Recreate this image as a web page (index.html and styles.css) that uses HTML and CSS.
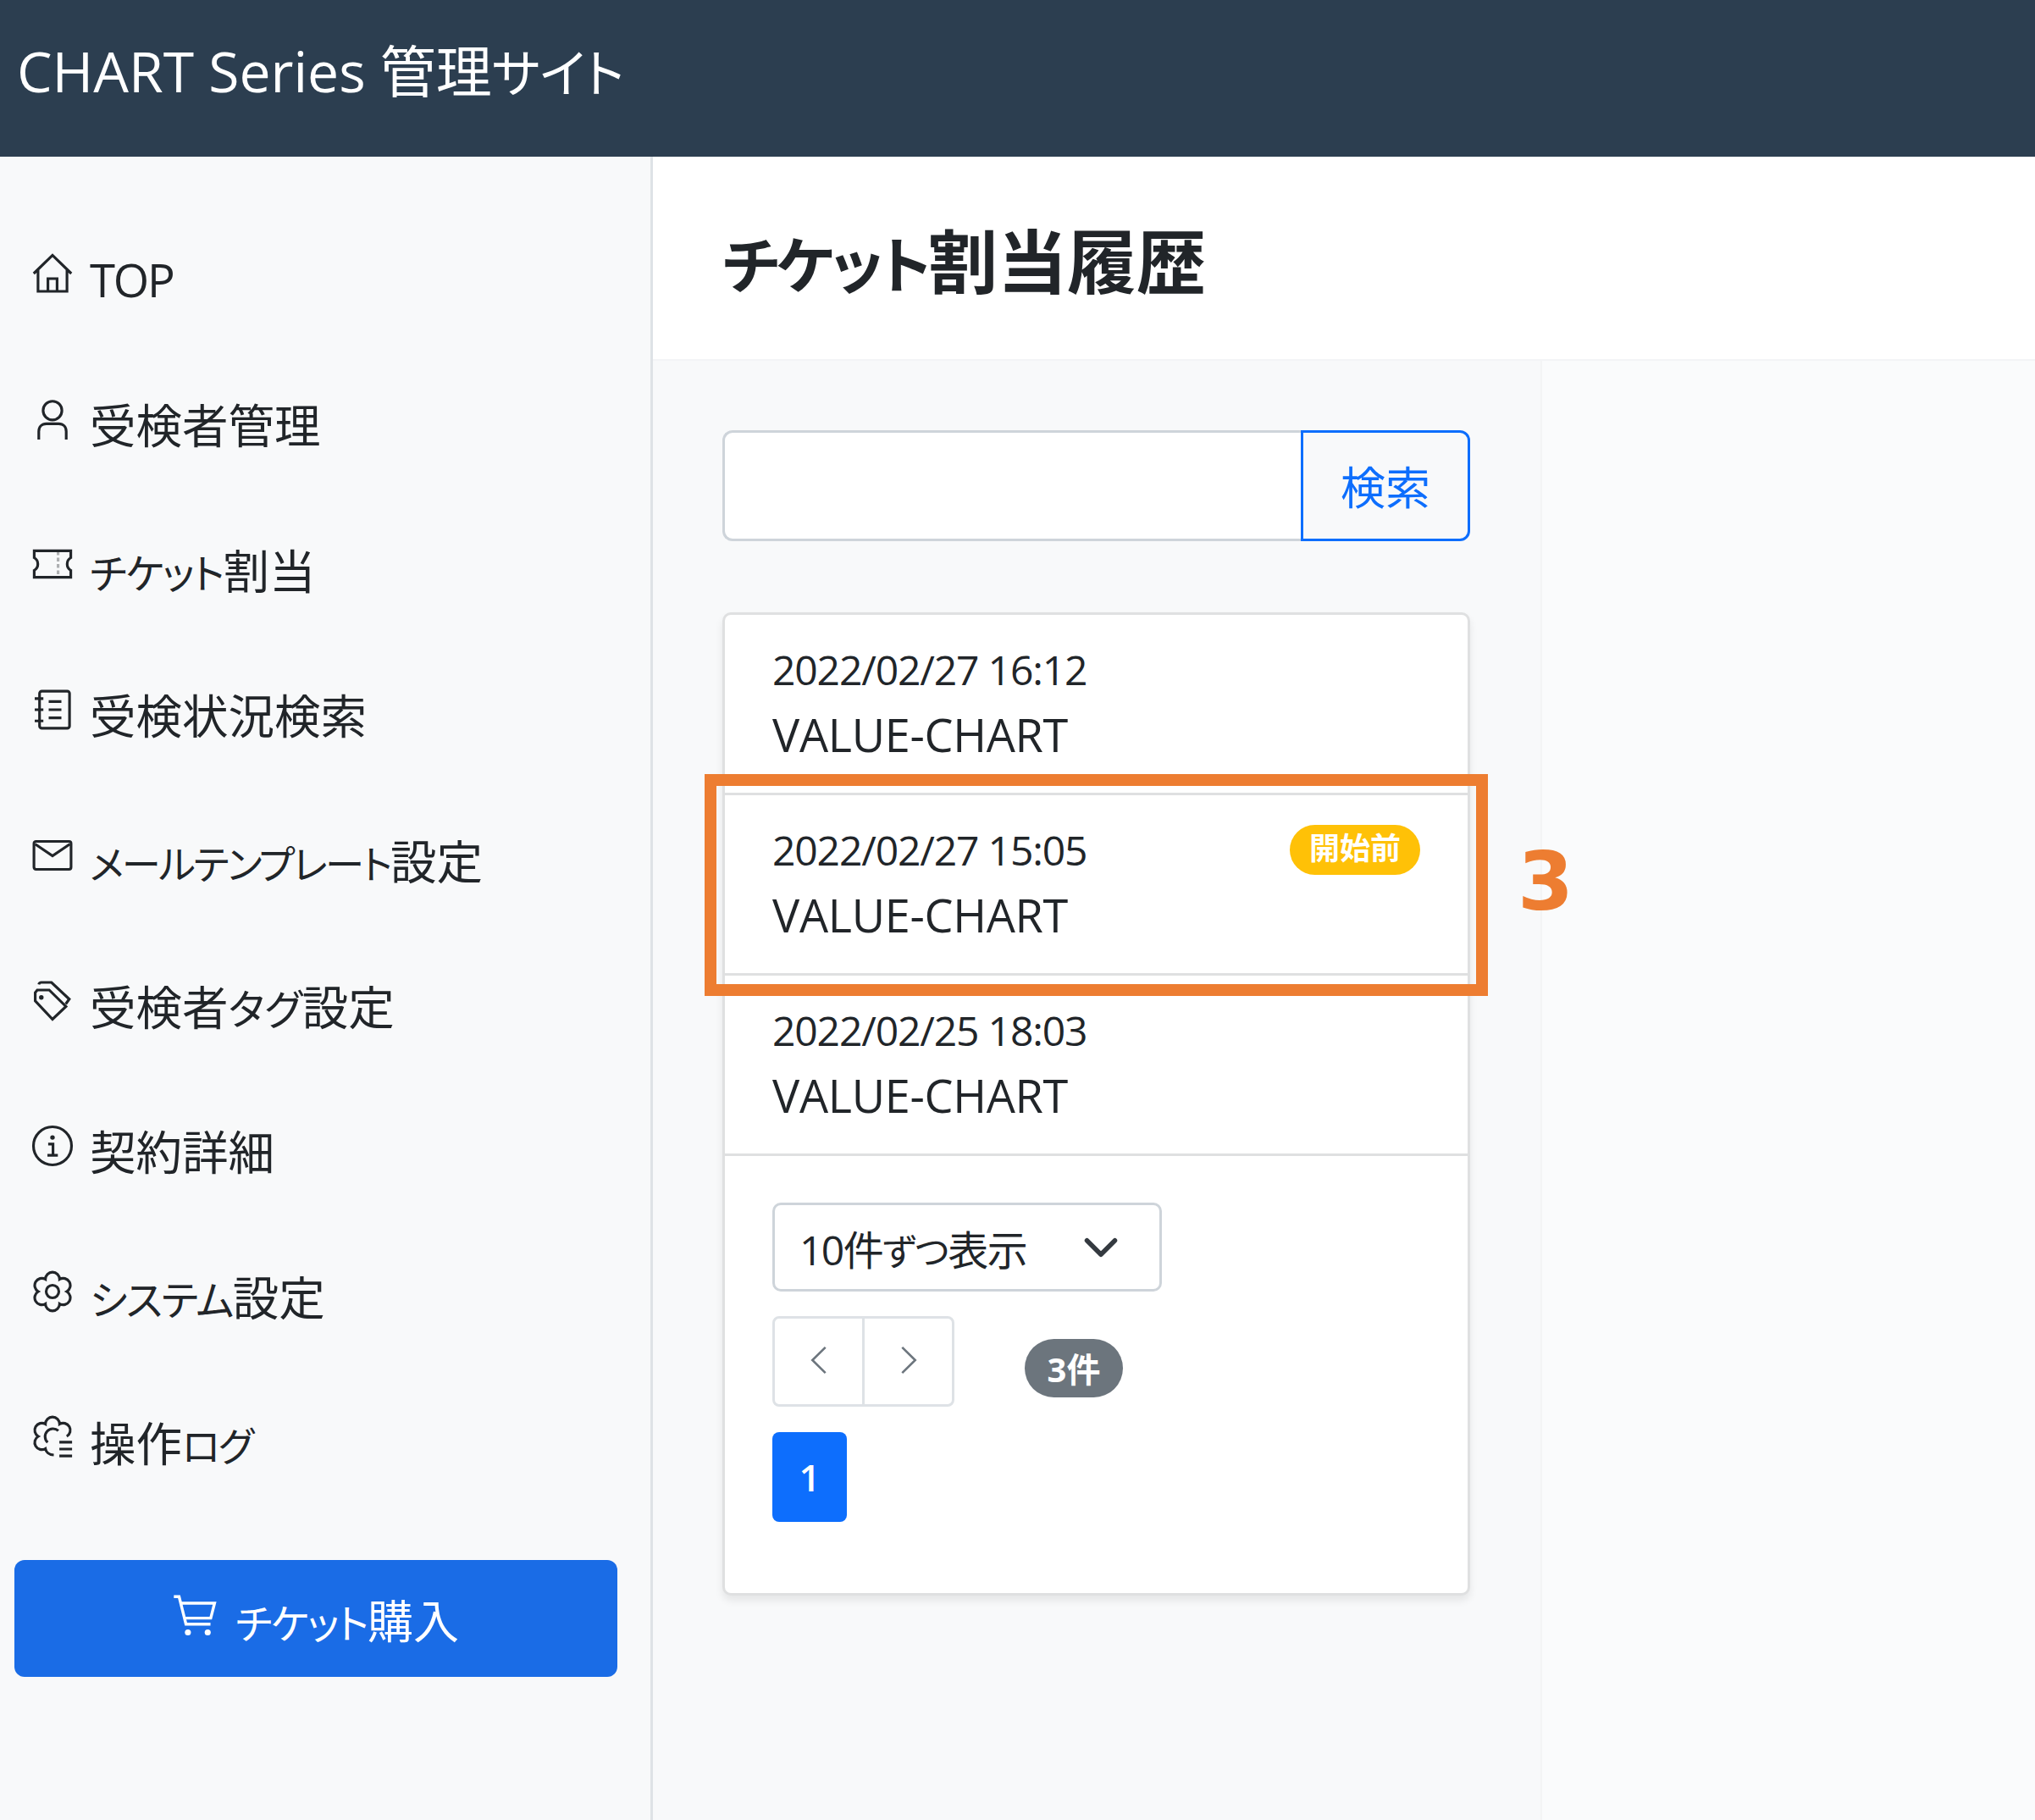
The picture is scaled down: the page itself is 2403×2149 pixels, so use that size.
FILE: index.html
```html
<!DOCTYPE html>
<html lang="ja">
<head>
<meta charset="utf-8">
<title>チケット割当履歴</title>
<link rel="stylesheet" href="styles.css">
</head>
<body>
<header class="topbar"><span class="brand">CHART Series 管理<span class="kana-brand">サイト</span></span></header>
<div class="shell">
  <aside class="sidebar">
    <nav class="nav">
      <a class="nav-item"><svg class="icon" viewBox="0 0 16 16"><path d="M.6 8 8 .8 15.4 8M2.300 6.600V15h11.400V6.600M6.200 15v-5h3.600v5"/></svg><span class="nav-label latin">TOP</span></a>
      <a class="nav-item"><svg class="icon" viewBox="0 0 16 16"><circle cx="8" cy="4.600" r="3.700"/><path d="M2.600 16v-3.200c0-1.800 1.200-3 3-3h4.800c1.800 0 3 1.200 3 3V16"/></svg><span class="nav-label">受検者管理</span></a>
      <a class="nav-item"><svg class="icon" viewBox="0 0 16 16"><path d="M.8 2.800h14.400v2.700a2.900 2.900 0 0 0 0 5v2.700H.8v-2.700a2.900 2.900 0 0 0 0-5z"/><path class="faint" d="M10.200 3v10"/></svg><span class="nav-label"><span class="kana">チケット</span>割当</span></a>
      <a class="nav-item"><svg class="icon" viewBox="0 0 16 16"><rect x="2.900" y=".7" width="11.800" height="14.600" rx=".9"/><path d="M1 3.600h3.400M1 8h3.400M1 12.400h3.400M6.500 4.800h5M6.500 8h5M6.500 11.200h5"/></svg><span class="nav-label">受検状況検索</span></a>
      <a class="nav-item"><svg class="icon" viewBox="0 0 16 16"><rect x=".7" y="2.500" width="14.600" height="11" rx=".8"/><path d="M1.200 3.600 8 8.200l6.800-4.600"/></svg><span class="nav-label"><span class="kana-wide">メールテンプレート</span>設定</span></a>
      <a class="nav-item"><svg class="icon" viewBox="0 0 16 16"><path d="M1.200 5v3.300l6.800 7.200 5.300-5-6.600-6.500H2z"/><path d="M2.600 1.800Q2.800 1 3.600 1h4l7 6.600-1.400 1.900"/><circle class="dot" cx="3.600" cy="6.900" r=".9"/></svg><span class="nav-label">受検者<span class="kana-soft">タグ</span>設定</span></a>
      <a class="nav-item"><svg class="icon" viewBox="0 0 16 16"><circle cx="8" cy="8" r="7.500"/><path d="M6.300 7.300h1.900v4.300M6 11.700h4.100"/><circle class="dot" cx="8" cy="4.700" r=".9"/></svg><span class="nav-label">契約詳細</span></a>
      <a class="nav-item"><svg class="icon" viewBox="0 0 16 16"><path d="M10.800 3.150A2.800 2.800 0 0 1 13.600 8a2.800 2.800 0 0 1-2.800 4.850 2.800 2.800 0 0 1-5.600 0A2.800 2.800 0 0 1 2.400 8a2.800 2.800 0 0 1 2.800-4.850 2.800 2.800 0 0 1 5.600 0z"/><circle cx="8" cy="8" r="2.500"/></svg><span class="nav-label"><span class="kana">システム</span>設定</span></a>
      <a class="nav-item"><svg class="icon" viewBox="0 0 16 16"><path d="M13.600 8a2.800 2.800 0 0 0-2.800-4.850 2.800 2.800 0 0 0-5.600 0A2.800 2.800 0 0 0 2.400 8a2.800 2.800 0 0 0 2.800 4.850c.2 1.200 1.300 2.400 3.300 2.500M10.300 5.800A3.100 3.100 0 0 0 6.100 10.400"/><path d="M10.700 10.300h5M10.700 13h5M10.700 15.700h5"/></svg><span class="nav-label">操作<span class="kana-wide">ログ</span></span></a>
    </nav>
    <button class="buy"><svg class="icon cart" viewBox="0 0 16 16"><path d="M.4 1h1.900l2.500 10h8.900M3 3.400h12.200l-1.400 5.400H4.300"/><circle class="dot" cx="5.500" cy="14" r="1.100"/><circle class="dot" cx="12.700" cy="14" r="1.100"/></svg><span><span class="kana">チケット</span>購入</span></button>
  </aside>
  <main class="main">
    <div class="titlebar"><h1 class="title"><span class="kana-title">チケット</span>割当履歴</h1></div>
    <div class="body">
      <section class="column">
        <div class="search"><input class="search-input" type="text" aria-label="検索"><button class="search-btn">検索</button></div>
        <div class="card">
          <div class="row">
            <div class="row-top"><span class="date">2022/02/27 16:12</span></div>
            <div class="name">VALUE-CHART</div>
          </div>
          <div class="row">
            <div class="row-top"><span class="date">2022/02/27 15:05</span><span class="badge-wait">開始前</span></div>
            <div class="name">VALUE-CHART</div>
          </div>
          <div class="row">
            <div class="row-top"><span class="date">2022/02/25 18:03</span></div>
            <div class="name">VALUE-CHART</div>
          </div>
          <div class="pager">
            <div class="select"><span>10件<span class="kana-select">ずつ</span>表示</span><svg class="chev" viewBox="0 0 16 16"><path d="m2 5 6 6 6-6"/></svg></div>
            <div class="pager-row">
              <div class="arrows">
                <button class="arrow"><svg class="arrow-icon" viewBox="0 0 16 16"><path d="M10.800 2.500 5.200 8l5.600 5.500"/></svg></button>
                <button class="arrow"><svg class="arrow-icon" viewBox="0 0 16 16"><path d="M5.200 2.500 10.800 8l-5.600 5.500"/></svg></button>
              </div>
              <span class="count">3件</span>
            </div>
            <button class="page">1</button>
          </div>
        </div>
        <div class="callout"></div>
        <div class="callout-num">3</div>
      </section>
    </div>
  </main>
</div>
</body>
</html>
```
FILE: styles.css
```css
* { box-sizing: border-box; }
html, body { margin: 0; height: 100%; }
body {
  display: flex;
  flex-direction: column;
  min-height: 100vh;
  font-family: "Open Sans", "Noto Sans CJK JP", sans-serif;
  font-feature-settings: "palt";
  color: #212529;
  background: #fff;
  overflow: hidden;
}
button { font: inherit; font-feature-settings: inherit; cursor: pointer; }

.kana { font-size: .88em; letter-spacing: -.03em; }
.kana-soft { font-size: .9em; }
.kana-wide { font-size: .85em; letter-spacing: -.05em; }
.kana-brand { font-size: .92em; letter-spacing: -.01em; }
.kana-title { font-size: .88em; letter-spacing: -.05em; }
.kana-select { font-size: .9em; }

.topbar {
  flex: none;
  height: 185px;
  background: #2c3e50;
  color: #fff;
  display: flex;
  align-items: center;
  padding: 0 0 19px 20px;
}
.brand { font-size: 66px; line-height: 1; white-space: nowrap; }

.shell { flex: 1; display: flex; min-height: 0; }

.sidebar {
  flex: none;
  width: 771px;
  background: #f8f9fa;
  border-right: 3px solid #dee2e6;
  padding: 60px 39px 0 17px;
}
.nav { display: flex; flex-direction: column; }
.nav-item {
  height: 171.7px;
  display: flex;
  align-items: center;
  gap: 20px;
  padding-left: 21px;
  font-size: 54.5px;
  color: #212529;
  white-space: nowrap;
}
.nav-label { margin-bottom: 6px; }
.latin { margin-bottom: 2px; letter-spacing: -2.2px; }
.icon {
  flex: none;
  width: 48px;
  height: 48px;
  margin-bottom: 16px;
  fill: none;
  stroke: #212529;
  stroke-width: 1.05;
  overflow: visible;
}
.icon .dot { fill: #212529; stroke: none; }
.icon .faint { stroke: #212529; stroke-opacity: .35; stroke-dasharray: 1.5 1; }

.buy {
  width: 712px;
  height: 138px;
  margin-top: 52px;
  border: 0;
  border-radius: 12px;
  background: #1a6ce6;
  color: #fff;
  font-size: 54px;
  display: flex;
  align-items: center;
  justify-content: center;
  gap: 22px;
}
.buy .cart { width: 52px; height: 52px; stroke: #fff; margin-bottom: 6px; }
.buy .cart .dot { fill: #fff; }

.main { flex: 1; display: flex; flex-direction: column; min-width: 0; }
.titlebar {
  flex: none;
  height: 241px;
  background: #fff;
  border-bottom: 2px solid #f3f4f6;
  display: flex;
  align-items: center;
  padding: 6px 0 0 82px;
}
.title { margin: 0; font-size: 82px; font-weight: 700; line-height: 1; color: #212529; }

.body { flex: 1; background: #fafbfc; display: flex; }
.column {
  position: relative;
  width: 1050px;
  background: #f8f9fa;
  border-right: 2px solid #f3f4f5;
  padding: 82px 83px 0 82px;
}

.search { display: flex; height: 131px; }
.search-input {
  flex: 1;
  min-width: 0;
  border: 3px solid #ced4da;
  border-right: 0;
  border-radius: 12px 0 0 12px;
  background: #fff;
}
.search-btn {
  width: 200px;
  border: 3px solid #0d6efd;
  border-radius: 0 12px 12px 0;
  background: #f8f9fa;
  color: #0d6efd;
  font-size: 53px;
  padding: 0;
}

.card {
  margin-top: 84px;
  height: 1161px;
  background: #fff;
  border: 3px solid #dfe0e1;
  border-radius: 10px;
  box-shadow: 0 6px 10px rgba(0, 0, 0, .08);
  display: flex;
  flex-direction: column;
}
.row {
  height: 213px;
  padding: 28px 56px 0;
  border-bottom: 3px solid #dfe0e1;
}
.row-top { display: flex; justify-content: space-between; align-items: flex-start; height: 74px; }
.date { font-size: 48px; line-height: 74px; letter-spacing: -1.15px; }
.name { font-size: 54px; line-height: 78px; letter-spacing: -.3px; }
.badge-wait {
  width: 154px;
  height: 59px;
  margin-top: 7px;
  border-radius: 30px;
  background: #ffc107;
  color: #fff;
  font-size: 36px;
  font-weight: 700;
  line-height: 56px;
  text-align: center;
}

.pager { flex: 1; padding: 55px 56px 0; }
.select {
  width: 460px;
  height: 105px;
  border: 3px solid #ced4da;
  border-radius: 10px;
  display: flex;
  align-items: center;
  justify-content: space-between;
  padding: 0 47px 0 29px;
  font-size: 48px;
  letter-spacing: -1.6px;
}
.chev { width: 44px; height: 44px; fill: none; stroke: #343a40; stroke-width: 2; stroke-linecap: round; stroke-linejoin: round; }
.pager-row { display: flex; align-items: center; gap: 83px; margin-top: 29px; }
.arrows {
  display: flex;
  width: 215px;
  height: 107px;
  border: 3px solid #dee2e6;
  border-radius: 8px;
}
.arrow {
  flex: 1;
  border: 0;
  background: #fff;
  padding: 0;
  display: flex;
  align-items: center;
  justify-content: center;
  border-radius: 8px;
}
.arrow + .arrow { border-left: 3px solid #dee2e6; border-radius: 0 8px 8px 0; }
.arrow-icon { width: 44px; height: 44px; fill: none; stroke: #6c757d; stroke-width: .95; margin-bottom: 4px; }
.count {
  width: 116px;
  height: 69px;
  margin-top: 16px;
  border-radius: 35px;
  background: #6c757d;
  color: #fff;
  font-size: 40px;
  font-weight: 700;
  line-height: 71px;
  text-align: center;
}
.page {
  display: block;
  width: 88px;
  height: 106px;
  margin-top: 30px;
  border: 0;
  border-radius: 8px;
  background: #0d6efd;
  color: #fff;
  font-size: 44px;
  font-weight: 600;
  padding: 0;
}

.callout {
  position: absolute;
  left: 61px;
  top: 488px;
  width: 925px;
  height: 262px;
  border: 14px solid #ed7d31;
  pointer-events: none;
}
.callout-num {
  position: absolute;
  left: 1021px;
  top: 549px;
  font-family: "DejaVu Sans", sans-serif;
  font-size: 95px;
  font-weight: 700;
  line-height: 132px;
  color: #ed7d31;
}
```
